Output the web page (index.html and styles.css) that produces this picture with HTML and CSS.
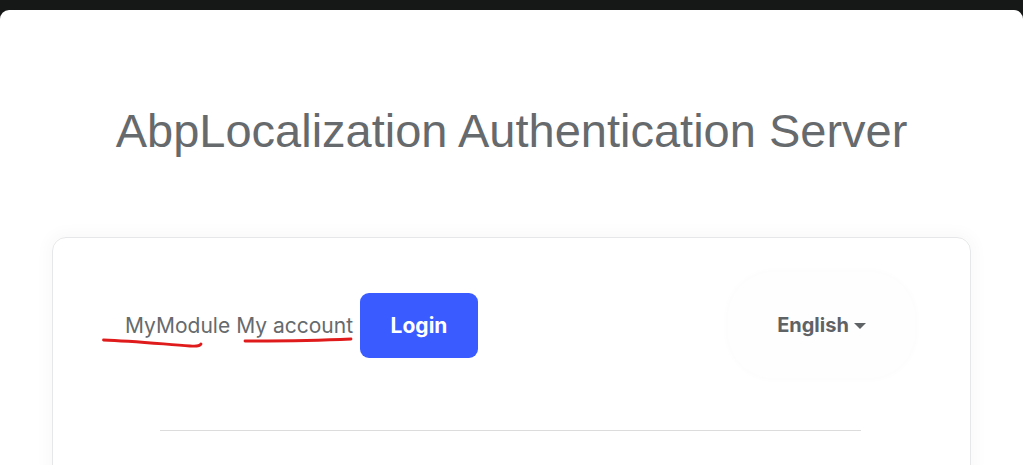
FILE: index.html
```html
<!DOCTYPE html>
<html lang="en">
<head>
<meta charset="utf-8">
<title>AbpLocalization Authentication Server</title>
<link rel="stylesheet" href="styles.css">
</head>
<body>
<div class="window">
  <h1 class="title">AbpLocalization Authentication Server</h1>
  <div class="card">
    <div class="navrow">
      <nav class="links">
        <a class="link" href="#">MyModule<svg class="mark mark-a" width="104" height="12" viewBox="0 0 104 12"><path d="M1.5 3 C 30 4, 60 7, 88 9 C 94 9.5, 98 9, 99 7" fill="none" stroke="#e01b1b" stroke-width="2.8" stroke-linecap="round"/></svg></a>
        <a class="link" href="#">My account<svg class="mark mark-b" width="112" height="8" viewBox="0 0 112 8"><path d="M2 5 C 35 5, 75 4.5, 108 3" fill="none" stroke="#e01b1b" stroke-width="2.8" stroke-linecap="round"/></svg></a>
        <a class="btn-login" href="#">Login</a>
      </nav>
      <div class="lang">
        <span class="lang-label">English</span><span class="caret"></span>
      </div>
    </div>
    <hr class="divider">
  </div>
</div>
</body>
</html>
```
FILE: styles.css
```css
html, body {
  margin: 0;
  padding: 0;
  height: 100%;
}
body {
  background: #161717;
  font-family: Inter, "Noto Sans", sans-serif;
  overflow: hidden;
}
.window {
  margin-top: 10px;
  background: #ffffff;
  border-radius: 9px 9px 0 0;
  height: calc(100% - 10px);
  padding-top: 1px;
  box-sizing: border-box;
  overflow: hidden;
}
.title {
  margin: 85px 0 0;
  text-align: center;
  font-family: "Liberation Sans", Arial, sans-serif;
  font-weight: 400;
  font-size: 47px;
  line-height: 70px;
  color: #666a6d;
}
.card {
  margin: 71px 52px 0;
  border: 1px solid #e6e7e8;
  border-radius: 14px;
  box-shadow: 0 0 14px 6px rgba(0, 20, 40, 0.022);
  padding: 34px 55px 0 72px;
  height: 240px;
}
.navrow {
  display: flex;
  align-items: center;
  justify-content: space-between;
}
.links {
  display: flex;
  align-items: center;
}
.link {
  position: relative;
  color: #666a6d;
  text-decoration: none;
  font-size: 21px;
  margin-right: 6px;
}
.mark {
  position: absolute;
  pointer-events: none;
}
.mark-a {
  left: -23px;
  top: 24px;
}
.mark-b {
  left: 7px;
  top: 23px;
}
.btn-login {
  display: flex;
  align-items: center;
  justify-content: center;
  width: 118px;
  height: 65px;
  border-radius: 9px;
  background: #3a5bff;
  color: #ffffff;
  font-weight: 700;
  font-size: 21px;
  text-decoration: none;
  margin-left: 1px;
}
.lang {
  display: flex;
  align-items: center;
  justify-content: center;
  width: 187px;
  height: 106px;
  border-radius: 46px;
  background: #fefefe;
  box-shadow: 0 0 4px 3px rgba(0, 20, 40, 0.01);
  color: #5f6366;
  font-weight: 700;
  font-size: 20px;
}
.caret {
  width: 0;
  height: 0;
  margin-left: 5px;
  margin-top: 1px;
  border-left: 6px solid transparent;
  border-right: 6px solid transparent;
  border-top: 6px solid #5f6366;
}
.divider {
  margin: 52px 54px 0 35px;
  border: 0;
  border-top: 1px solid #dcdcdc;
}
```
